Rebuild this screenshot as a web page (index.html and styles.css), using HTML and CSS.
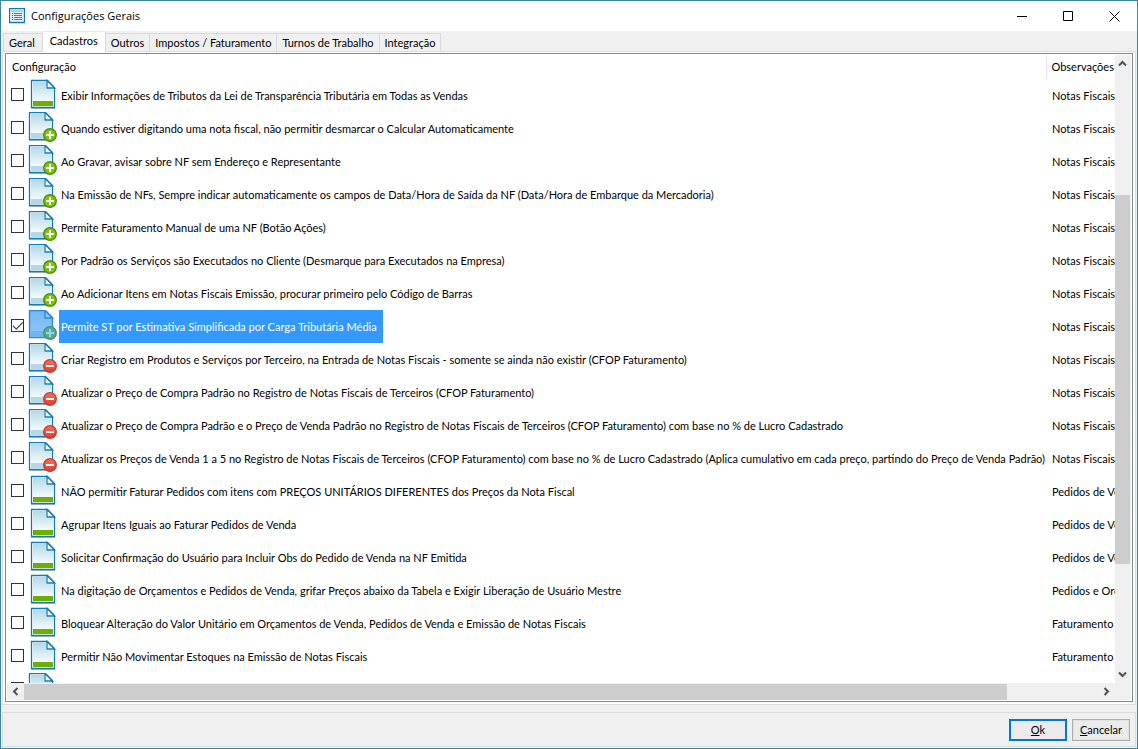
FILE: index.html
```html
<!DOCTYPE html>
<html lang="pt-BR">
<head>
<meta charset="utf-8">
<title>Configurações Gerais</title>
<link rel="stylesheet" href="styles.css">
</head>
<body>
<svg class="defs" aria-hidden="true">
  <defs>
    <linearGradient id="paper" x1="0" y1="0" x2="0" y2="1"><stop offset="0" stop-color="#b4d9e8"/><stop offset="1" stop-color="#f4fafb"/></linearGradient>
    <linearGradient id="paperSel" x1="0" y1="0" x2="0" y2="1"><stop offset="0" stop-color="#74b8f4"/><stop offset="1" stop-color="#93c6fa"/></linearGradient>
    <linearGradient id="red" x1="0" y1="0" x2="0" y2="1"><stop offset="0" stop-color="#f8705c"/><stop offset="1" stop-color="#e03a2c"/></linearGradient>
    <symbol id="doc" viewBox="0 0 32 33">
      <path d="M4 29.500h24" stroke="#b5bcc0" stroke-width="1"/>
      <path d="M4.500 1.500h16l7 7v20h-23z" fill="#fff" stroke="#0f7db4" stroke-width="1.300"/>
      <path d="M6 3h13v7h7v12H6z" fill="url(#paper)"/>
      <path d="M6 22h20v5H6z" fill="#6fae00"/>
      <path d="M20 1.500v7.500h7.500z" fill="#fff" stroke="#0f7db4" stroke-width="1.300"/>
    </symbol>
    <symbol id="sheet" viewBox="0 0 32 33">
      <path d="M2 28.500h23" stroke="#b5bcc0" stroke-width="1"/>
      <path d="M2.500 .5h16l7 7v20h-23z" fill="#fff" stroke="#0f7db4" stroke-width="1.300"/>
      <path d="M4 2h13v7h7v12H4z" fill="url(#paper)"/>
      <path d="M4 21h20v5H4z" fill="#b4d8e6"/>
      <path d="M18 .5v7.500h7.500z" fill="#fff" stroke="#0f7db4" stroke-width="1.300"/>
    </symbol>
    <symbol id="add" viewBox="0 0 32 33">
      <use href="#sheet"/>
      <circle cx="23" cy="23" r="6.300" fill="#7fc400" stroke="#458b16" stroke-width="1.300"/>
      <path d="M23 19v8M19 23h8" stroke="#fff" stroke-width="2"/>
    </symbol>
    <symbol id="remove" viewBox="0 0 32 33">
      <use href="#sheet"/>
      <circle cx="23" cy="23" r="6.300" fill="url(#red)" stroke="#c83a30" stroke-width="1.300"/>
      <path d="M19 23h8" stroke="#fff" stroke-width="2"/>
    </symbol>
    <symbol id="addSel" viewBox="0 0 32 33">
      <path d="M2.500 .5h16l7 7v20h-23z" fill="url(#paperSel)" stroke="#2689dc" stroke-width="1.300"/>
      <path d="M4 21h20v5H4z" fill="#70b5f3"/>
      <path d="M18 .5v7.500h7.500z" fill="#8ec8fb" stroke="#2689dc" stroke-width="1.300"/>
      <circle cx="23" cy="23" r="6.300" fill="#57ae80" stroke="#3d9083" stroke-width="1.300"/>
      <path d="M23 19v8M19 23h8" stroke="#9bcdfd" stroke-width="2"/>
    </symbol>
  </defs>
</svg>
<div class="window">
  <header class="titlebar">
    <svg class="app-icon" viewBox="0 0 16 16" aria-hidden="true">
      <path d="M.5.5h15v14h-15z" fill="#fff" stroke="#0f78ae" stroke-width="1.400"/>
      <path d="M2 2h12v2H2z" fill="#a9d4e8"/>
      <path d="M2 4h12v9H2z" fill="#e3eff5"/>
      <path d="M3 5.500h1M3 7.500h1M3 9.500h1M3 11.500h1" stroke="#1477ae"/>
      <path d="M5 5.500h8M5 7.500h8M5 9.500h8M5 11.500h8" stroke="#6d7780"/>
    </svg>
    <h1 class="title">Configurações Gerais</h1>
    <button class="caption" aria-label="Minimizar"><svg viewBox="0 0 11 11"><path d="M0 5.500h10"/></svg></button>
    <button class="caption" aria-label="Maximizar"><svg viewBox="0 0 11 11"><path d="M.5.5h9v9h-9z"/></svg></button>
    <button class="caption" aria-label="Fechar"><svg viewBox="0 0 11 11"><path d="M.5.5l10 10M10.500.5l-10 10"/></svg></button>
  </header>
  <nav class="tabs" role="tablist">
    <button class="tab" role="tab">Geral</button>
    <button class="tab active" role="tab" aria-selected="true">Cadastros</button>
    <button class="tab" role="tab">Outros</button>
    <button class="tab" role="tab">Impostos / Faturamento</button>
    <button class="tab" role="tab">Turnos de Trabalho</button>
    <button class="tab" role="tab">Integração</button>
  </nav>
  <main class="panel">
    <div class="list">
      <div class="viewport">
        <table class="grid">
          <thead><tr><th class="main-col">Configuração</th><th class="obs">Observações</th></tr></thead>
          <tbody>
            <tr><td><label class="item"><input type="checkbox"><svg class="icon"><use href="#doc"/></svg><span class="text">Exibir Informações de Tributos da Lei de Transparência Tributária em Todas as Vendas</span></label></td><td>Notas Fiscais</td></tr>
            <tr><td><label class="item"><input type="checkbox"><svg class="icon"><use href="#add"/></svg><span class="text">Quando estiver digitando uma nota fiscal, não permitir desmarcar o Calcular Automaticamente</span></label></td><td>Notas Fiscais</td></tr>
            <tr><td><label class="item"><input type="checkbox"><svg class="icon"><use href="#add"/></svg><span class="text">Ao Gravar, avisar sobre NF sem Endereço e Representante</span></label></td><td>Notas Fiscais</td></tr>
            <tr><td><label class="item"><input type="checkbox"><svg class="icon"><use href="#add"/></svg><span class="text">Na Emissão de NFs, Sempre indicar automaticamente os campos de Data/Hora de Saída da NF (Data/Hora de Embarque da Mercadoria)</span></label></td><td>Notas Fiscais</td></tr>
            <tr><td><label class="item"><input type="checkbox"><svg class="icon"><use href="#add"/></svg><span class="text">Permite Faturamento Manual de uma NF (Botão Ações)</span></label></td><td>Notas Fiscais</td></tr>
            <tr><td><label class="item"><input type="checkbox"><svg class="icon"><use href="#add"/></svg><span class="text">Por Padrão os Serviços são Executados no Cliente (Desmarque para Executados na Empresa)</span></label></td><td>Notas Fiscais</td></tr>
            <tr><td><label class="item"><input type="checkbox"><svg class="icon"><use href="#add"/></svg><span class="text">Ao Adicionar Itens em Notas Fiscais Emissão, procurar primeiro pelo Código de Barras</span></label></td><td>Notas Fiscais</td></tr>
            <tr><td><label class="item selected"><input type="checkbox" checked><svg class="icon"><use href="#addSel"/></svg><span class="text">Permite ST por Estimativa Simplificada por Carga Tributária Média</span></label></td><td>Notas Fiscais</td></tr>
            <tr><td><label class="item"><input type="checkbox"><svg class="icon"><use href="#remove"/></svg><span class="text">Criar Registro em Produtos e Serviços por Terceiro, na Entrada de Notas Fiscais - somente se ainda não existir (CFOP Faturamento)</span></label></td><td>Notas Fiscais</td></tr>
            <tr><td><label class="item"><input type="checkbox"><svg class="icon"><use href="#remove"/></svg><span class="text">Atualizar o Preço de Compra Padrão no Registro de Notas Fiscais de Terceiros (CFOP Faturamento)</span></label></td><td>Notas Fiscais</td></tr>
            <tr><td><label class="item"><input type="checkbox"><svg class="icon"><use href="#remove"/></svg><span class="text">Atualizar o Preço de Compra Padrão e o Preço de Venda Padrão no Registro de Notas Fiscais de Terceiros (CFOP Faturamento) com base no % de Lucro Cadastrado</span></label></td><td>Notas Fiscais</td></tr>
            <tr><td><label class="item"><input type="checkbox"><svg class="icon"><use href="#remove"/></svg><span class="text">Atualizar os Preços de Venda 1 a 5 no Registro de Notas Fiscais de Terceiros (CFOP Faturamento) com base no % de Lucro Cadastrado (Aplica cumulativo em cada preço, partindo do Preço de Venda Padrão)</span></label></td><td>Notas Fiscais</td></tr>
            <tr><td><label class="item"><input type="checkbox"><svg class="icon"><use href="#doc"/></svg><span class="text">NÃO permitir Faturar Pedidos com itens com PREÇOS UNITÁRIOS DIFERENTES dos Preços da Nota Fiscal</span></label></td><td>Pedidos de Venda</td></tr>
            <tr><td><label class="item"><input type="checkbox"><svg class="icon"><use href="#doc"/></svg><span class="text">Agrupar Itens Iguais ao Faturar Pedidos de Venda</span></label></td><td>Pedidos de Venda</td></tr>
            <tr><td><label class="item"><input type="checkbox"><svg class="icon"><use href="#doc"/></svg><span class="text">Solicitar Confirmação do Usuário para Incluir Obs do Pedido de Venda na NF Emitida</span></label></td><td>Pedidos de Venda</td></tr>
            <tr><td><label class="item"><input type="checkbox"><svg class="icon"><use href="#doc"/></svg><span class="text">Na digitação de Orçamentos e Pedidos de Venda, grifar Preços abaixo da Tabela e Exigir Liberação de Usuário Mestre</span></label></td><td>Pedidos e Orçamentos</td></tr>
            <tr><td><label class="item"><input type="checkbox"><svg class="icon"><use href="#doc"/></svg><span class="text">Bloquear Alteração do Valor Unitário em Orçamentos de Venda, Pedidos de Venda e Emissão de Notas Fiscais</span></label></td><td>Faturamento</td></tr>
            <tr><td><label class="item"><input type="checkbox"><svg class="icon"><use href="#doc"/></svg><span class="text">Permitir Não Movimentar Estoques na Emissão de Notas Fiscais</span></label></td><td>Faturamento</td></tr>
            <tr><td><label class="item"><input type="checkbox"><svg class="icon"><use href="#add"/></svg><span class="text"></span></label></td><td></td></tr>
          </tbody>
        </table>
      </div>
      <div class="scroll vertical">
        <button class="arrow" aria-label="Para cima"><svg viewBox="0 0 9 9"><path d="M1 6.500l3.500-3.500L8 6.500"/></svg></button>
        <div class="track"><div class="thumb"></div></div>
        <button class="arrow" aria-label="Para baixo"><svg viewBox="0 0 9 9"><path d="M1 2.500L4.500 6 8 2.500"/></svg></button>
      </div>
      <div class="scroll horizontal">
        <button class="arrow" aria-label="Para a esquerda"><svg viewBox="0 0 9 9"><path d="M6.500 1L3 4.500 6.500 8"/></svg></button>
        <div class="track"><div class="thumb"></div></div>
        <button class="arrow" aria-label="Para a direita"><svg viewBox="0 0 9 9"><path d="M2.500 1L6 4.500 2.500 8"/></svg></button>
      </div>
    </div>
  </main>
  <footer class="actions">
    <button class="button primary"><u>O</u>k</button>
    <button class="button"><u>C</u>ancelar</button>
  </footer>
</div>
</body>
</html>
```

FILE: styles.css
```css
* { box-sizing: border-box; }
body {
  margin: 0;
  font: 11px/14px Lato, "Liberation Sans", sans-serif;
  color: #000;
}
button {
  font: inherit;
  color: inherit;
  padding: 0;
  border: 0;
  background: none;
}
.defs { position: absolute; width: 0; height: 0; }
.window {
  display: flex;
  flex-direction: column;
  height: 100vh;
  border: 1px solid #3a87a3;
  background: #f0f0f0;
}
.titlebar {
  display: flex;
  align-items: center;
  height: 30px;
  padding-left: 8px;
  background: #fff;
}
.app-icon { width: 16px; height: 16px; }
.title {
  flex: 1;
  margin: 0 0 0 6px;
  font: 11px/16px "Open Sans", "Noto Sans", sans-serif;
}
.caption {
  display: flex;
  align-items: center;
  justify-content: center;
  width: 46px;
  height: 29px;
}
.caption svg {
  width: 11px;
  height: 11px;
  fill: none;
  stroke: #000;
}
.tabs {
  display: flex;
  align-items: flex-end;
  height: 20px;
  padding-left: 2px;
}
.tab {
  height: 18px;
  padding: 0 5px;
  border: 1px solid #d9d9d9;
  border-width: 1px 1px 0 0;
  white-space: nowrap;
}
.tab:first-child { border-left-width: 1px; padding-right: 7px; }
.tab.active {
  height: 21px;
  margin-bottom: -1px;
  padding: 0 7px 3px;
  border-top-color: #e6e6e6;
  background: #fff;
  z-index: 1;
}
.panel {
  flex: 1;
  display: flex;
  min-height: 0;
  margin: 0 1px;
  padding: 1px 2px 2px;
  border: 1px solid #dcdcdc;
  background: #fff;
}
.list {
  flex: 1;
  display: grid;
  grid-template: minmax(0, 1fr) 17px / minmax(0, 1fr) 16px;
  border: 1px solid #828790;
  padding: 1px;
  background: #fff;
}
.viewport { overflow: hidden; }
.grid {
  width: 100%;
  table-layout: fixed;
  border-collapse: collapse;
}
.grid th {
  height: 24px;
  padding: 0 5px;
  font-weight: normal;
  text-align: left;
}
.grid .obs {
  width: 69px;
  border-left: 1px solid #e5e5e5;
}
.grid td {
  height: 33px;
  padding: 0;
  overflow: hidden;
  white-space: nowrap;
}
.grid td + td { padding-left: 6px; }
.item {
  display: flex;
  align-items: center;
  height: 33px;
  padding-left: 4px;
}
.item input {
  flex: none;
  appearance: none;
  display: grid;
  place-items: center;
  width: 13px;
  height: 13px;
  margin: 0 3px 2px 0;
  border: 1px solid #333;
  background: #fff;
}
.item input:checked::before {
  content: "";
  width: 9px;
  height: 4px;
  margin-bottom: 3px;
  border: solid #333;
  border-width: 0 0 1px 1px;
  transform: rotate(-45deg);
}
.icon {
  flex: none;
  width: 32px;
  height: 33px;
}
.text {
  line-height: 33px;
  padding: 0 6px 0 2px;
  height: 33px;
}
.selected .text { background: #3399ff; color: #fff; }
.scroll { display: flex; background: #f0f0f0; }
.vertical { flex-direction: column; }
.horizontal { grid-column: 1 / -1; padding-right: 16px; }
.track { flex: 1; display: flex; }
.vertical .track { flex-direction: column; padding: 123px 0 102px; }
.vertical .thumb { margin-right: 1px; }
.horizontal .track { padding-right: 91px; }
.horizontal .thumb { margin-top: 1px; }
.thumb { flex: 1; background: #cdcdcd; }
.arrow {
  display: flex;
  align-items: center;
  justify-content: center;
  width: 17px;
  height: 17px;
}
.vertical .arrow { width: 15px; }
.arrow svg {
  width: 9px;
  height: 9px;
  fill: none;
  stroke: #505050;
  stroke-width: 2;
}
.actions {
  display: flex;
  justify-content: flex-end;
  gap: 5px;
  margin: 7px 1px 1px;
  padding: 6px 5px 5px;
  border: 1px solid #dcdcdc;
}
.button {
  width: 58px;
  height: 22px;
  border: 1px solid #adadad;
  background: #ebebeb;
  box-shadow: inset 0 0 0 1px #e0e0e0;
}
.button.primary { border: 2px solid #0078d7; box-shadow: none; }
```
